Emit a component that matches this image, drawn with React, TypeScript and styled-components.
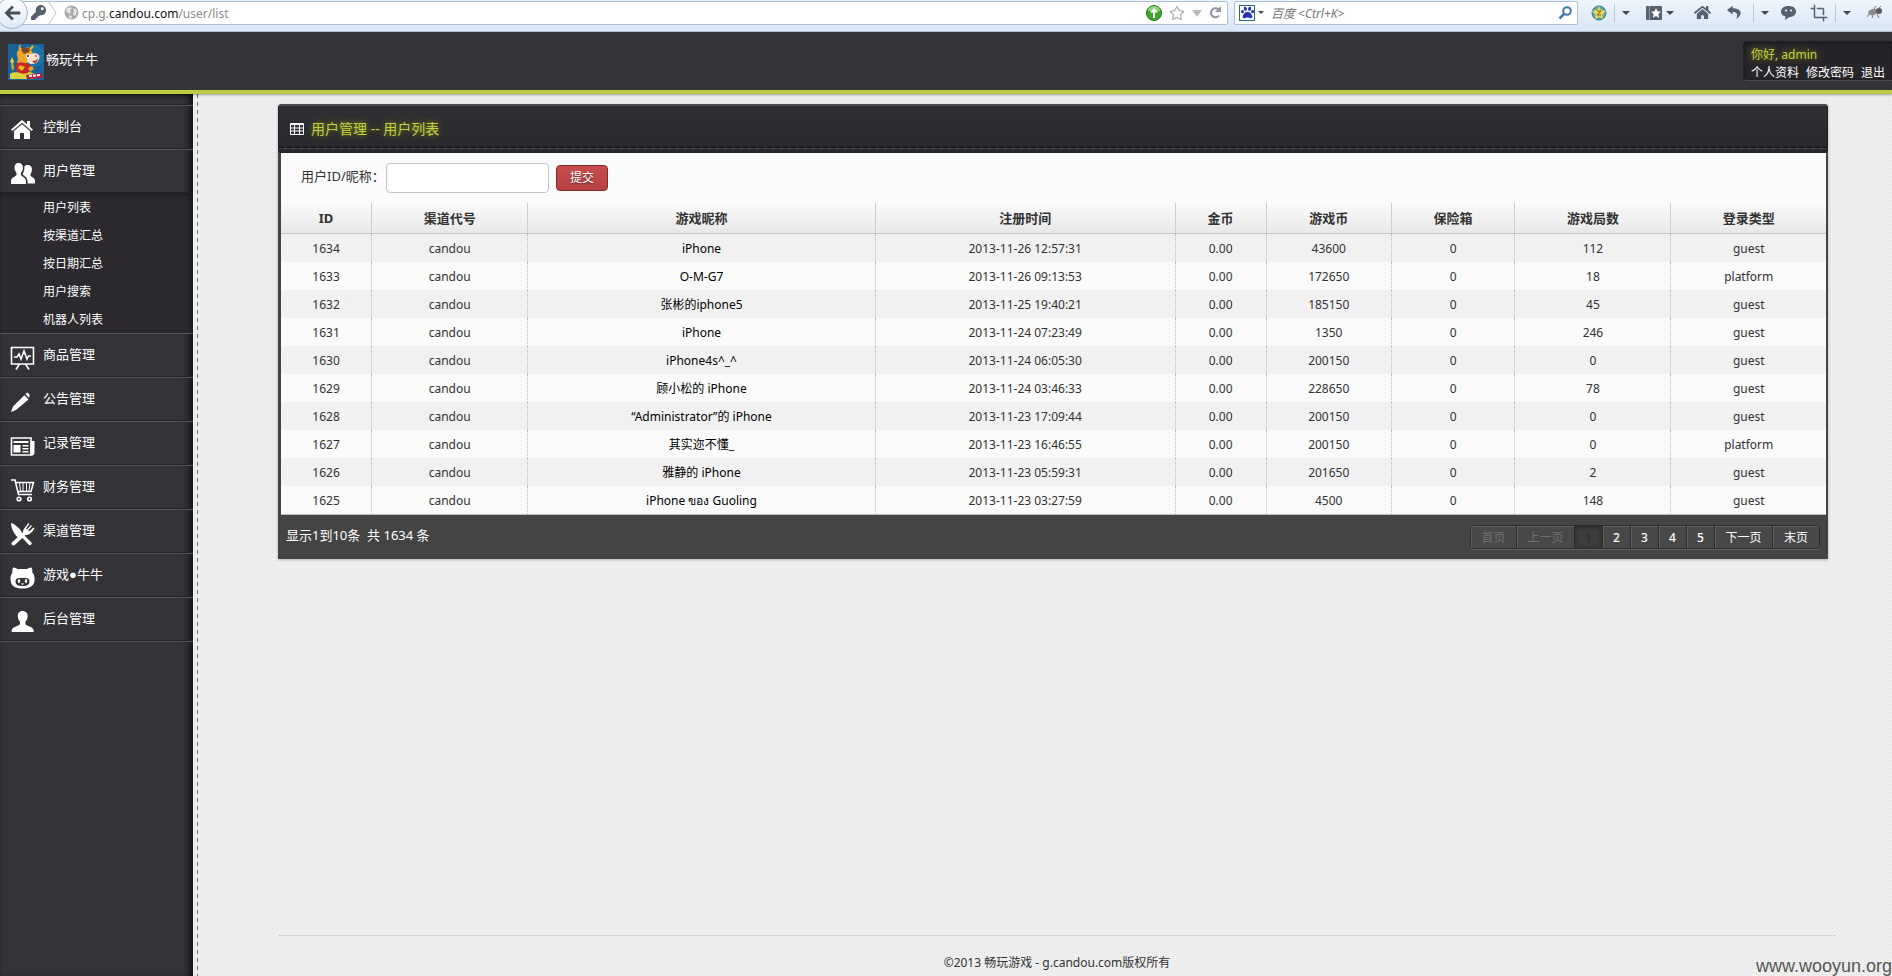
import React from "react";
import styled, { createGlobalStyle, css } from "styled-components";
import { FaRegStar, FaHome, FaPaw, FaKey } from "react-icons/fa";
import { MdCrop } from "react-icons/md";

const sans = `"Noto Sans", "Noto Sans CJK SC", sans-serif`;
const lime = "#bfcc42";

const GlobalStyle = createGlobalStyle`
  * { box-sizing: border-box; }
  html, body, #root { height: 100%; }
  body {
    margin: 0;
    overflow: hidden;
    font-family: ${sans};
    font-size: 12px;
    line-height: 20px;
    color: #333;
    background: #efefef conic-gradient(at 1px 1px, transparent 75%, #dcdcdc 0) 0 0 / 4px 4px;
  }
  a { color: inherit; text-decoration: none; }
  button, input { font: inherit; }
`;

const Page = styled.div`
  display: flex;
  flex-direction: column;
  min-height: 100vh;
  background: conic-gradient(at 1px 1px, transparent 75%, #e0e0e0 0) 2px 2px / 4px 4px;
`;

/* Browser toolbar */
const Toolbar = styled.div`
  display: flex;
  align-items: center;
  height: 32px;
  padding-bottom: 6px;
  background: linear-gradient(#eef5fc, #d8e6f5);
  border-bottom: 1px solid #b5c3d3;
  color: #56616d;
`;
const BackButton = styled.button`
  display: grid;
  place-items: center;
  flex: none;
  width: 32px;
  height: 32px;
  margin: 0 -8px 0 -4px;
  padding: 0;
  border: 1px solid #a3b6c9;
  border-radius: 50%;
  background: linear-gradient(#fdfeff, #dfe9f4);
  color: #46505b;
  z-index: 1;
`;
const Field = styled.div`
  display: flex;
  align-items: center;
  height: 24px;
  border: 1px solid #a9c0d6;
  border-radius: 2px;
  background: #fff;
`;
const AddressField = styled(Field)`
  flex: 1;
  padding: 0 6px 0 10px;
  gap: 7px;
`;
const Identity = styled.div`
  display: flex;
  align-items: center;
  gap: 2px;
`;
const Url = styled.a`
  flex: 1;
  margin-left: -4px;
  padding-top: 2px;
  color: #8c8c8c;
  b { color: #111; font-weight: 400; }
`;
const SearchField = styled(Field)`
  width: 344px;
  margin-left: 6px;
  padding: 0 4px;
  gap: 3px;
`;
const Engine = styled.span`
  display: grid;
  place-items: center;
  width: 16px;
  height: 16px;
  border: 1px solid #2a6a8a;
  color: #2430b8;
`;
const SearchInput = styled.input`
  flex: 1;
  min-width: 0;
  padding: 2px 0 0 4px;
  border: 0;
  outline: 0;
  background: none;
  &::placeholder { color: #777; font-style: italic; opacity: 1; }
`;
const IconButton = styled.button<{ $w?: number }>`
  display: grid;
  place-items: center;
  width: ${(p) => p.$w ?? 16}px;
  height: 18px;
  padding: 0;
  border: 0;
  background: none;
  color: inherit;
`;
const Tools = styled.div`
  display: flex;
  align-items: center;
  gap: 7px;
  width: 314px;
  padding-left: 13px;
  flex: none;
`;
const Divider = styled.span`
  width: 1px;
  height: 18px;
  background: #b9c6d4;
`;
const Caret = styled.span<{ $small?: boolean }>`
  display: inline-block;
  border: ${(p) => (p.$small ? 3 : 4)}px solid transparent;
  border-top-color: #3f4853;
  border-bottom: 0;
`;

/* Site header */
const twill = css`
  background-color: #37363b;
  background-image: linear-gradient(
    135deg,
    rgba(0, 0, 0, 0.12) 25%,
    transparent 25% 50%,
    rgba(0, 0, 0, 0.12) 50% 75%,
    transparent 75%
  );
  background-size: 4px 4px;
`;
const Header = styled.header`
  ${twill}
  display: flex;
  justify-content: space-between;
  height: 62px;
  border-bottom: 4px solid ${lime};
  box-shadow: 0 1px 2px rgba(0, 0, 0, 0.35);
  z-index: 2;
`;
const Brand = styled.a`
  display: flex;
  align-items: center;
  gap: 2px;
  padding: 0 0 4px 8px;
  color: #fff;
  font-size: 13px;
  svg { margin-top: 5px; }
`;
const UserBox = styled.div`
  width: 149px;
  height: 40px;
  margin-top: 9px;
  padding: 4px 0 0 7px;
  line-height: 18px;
  color: #fff;
  white-space: nowrap;
  background: rgba(30, 29, 34, 0.6);
  border: 1px solid #222126;
  border-right: 0;
  border-bottom-color: #4c4b50;
  border-radius: 4px 0 0 4px;
  box-shadow: inset 0 1px 3px rgba(0, 0, 0, 0.4);
`;
const Hello = styled.div`
  color: #c3d042;
  text-shadow: 0 0 6px #8f9c14;
`;
const UserLinks = styled.nav`
  display: flex;
  gap: 7px;
`;

/* Sidebar */
const Body = styled.div`
  display: flex;
  flex: 1;
`;
const Sidebar = styled.aside`
  ${twill}
  flex: none;
  width: 193px;
  padding-top: 10px;
  color: #fff;
  box-shadow: inset -7px 0 6px -3px rgba(0, 0, 0, 0.6), inset 0 4px 4px -2px rgba(0, 0, 0, 0.5);
`;
const Menu = styled.ul`
  margin: 0;
  padding: 0;
  list-style: none;
  border-top: 1px solid #232226;
  border-bottom: 1px solid #55545a;
`;
const MenuLink = styled.a`
  display: flex;
  align-items: center;
  gap: 9px;
  height: 44px;
  padding: 0 0 2px 10px;
  font-size: 13px;
  border-top: 1px solid #55545a;
  border-bottom: 1px solid #232226;
  svg { margin-top: 8px; }
`;
const Bullet = styled.span`
  font-family: "Liberation Sans", sans-serif;
`;
const SubMenu = styled.ul`
  margin: 0;
  padding: 0;
  list-style: none;
  background: rgba(38, 37, 42, 0.6);
  box-shadow: inset 0 2px 3px rgba(0, 0, 0, 0.25);
`;
const SubLink = styled.a`
  display: block;
  padding: 2px 0 0 43px;
  line-height: 26px;
`;

/* Content */
const Content = styled.main`
  display: flex;
  flex: 1;
  flex-direction: column;
  min-width: 0;
  margin-left: 4px;
  padding: 10px 56px 0 81px;
  background: repeating-linear-gradient(#777 0 4px, transparent 4px 8px) 0 0 / 1px 100% no-repeat;
`;
const Panel = styled.section`
  margin-right: 8px;
  background: #444;
  border-radius: 4px 4px 0 0;
  box-shadow: 0 1px 3px rgba(0, 0, 0, 0.25);
`;
const PanelHead = styled.div`
  height: 49px;
  border: 1px solid #222126;
  border-top: 2px solid #4b4a50;
  border-radius: 4px;
  background: linear-gradient(#302f34, #28272c);
`;
const PanelTitle = styled.h1`
  display: flex;
  align-items: center;
  gap: 7px;
  height: 42px;
  margin: 0;
  padding: 4px 0 0 11px;
  font-size: 14px;
  font-weight: 400;
  color: #c3d042;
  text-shadow: 0 0 6px #8f9c14;
  background: repeating-linear-gradient(90deg, #0c0c0e 0 5px, transparent 5px 8px) 0 100% / 100% 1px no-repeat;
  box-shadow: 0 1px 0 #444349;
`;
const PanelBody = styled.div`
  margin: 0 2px 0 3px;
  background: #fafafa;
  border-bottom: 1px solid #bbb;
`;
const Filter = styled.form`
  display: flex;
  align-items: center;
  height: 50px;
  padding-left: 20px;
`;
const FilterLabel = styled.label`
  width: 85px;
  padding-bottom: 4px;
  font-size: 13px;
  white-space: nowrap;
`;
const FilterInput = styled.input`
  width: 163px;
  height: 30px;
  padding: 4px 6px;
  border: 1px solid #c4c4c4;
  border-radius: 4px;
  background: #fff;
`;
const Submit = styled.button`
  width: 52px;
  height: 26px;
  margin-left: 7px;
  padding: 0;
  font-size: 12px;
  color: #fff;
  text-shadow: 0 1px 2px rgba(0, 0, 0, 0.5);
  background: linear-gradient(#c84c4c, #b64242);
  border: 1px solid #7e2b2b;
  border-radius: 4px;
`;
const Table = styled.table`
  width: 100%;
  table-layout: fixed;
  border-collapse: separate;
  border-spacing: 0;
  text-align: center;
  th {
    height: 31px;
    padding: 0;
    font-size: 13px;
    font-weight: 700;
    background: linear-gradient(#fafafa, #e8e8e8);
    border-bottom: 1px solid #c6c6c6;
    border-right: 1px solid #ccc;
  }
  td {
    height: 28px;
    padding: 2px 0 0;
    border-right: 1px dotted #bbb;
  }
  th:last-child, td:last-child { border-right: 0; }
  td:nth-child(3) { color: #000; }
  tbody tr:nth-child(odd) { background: #f1f1f1; }
`;
const Col = styled.col<{ $share: number }>`
  width: ${(p) => p.$share}%;
`;
const PanelFoot = styled.div`
  display: flex;
  align-items: center;
  justify-content: space-between;
  height: 44px;
  padding: 0 8px;
  color: #fff;
`;
const Summary = styled.span`
  padding-bottom: 4px;
  font-size: 13px;
`;
const Pager = styled.nav`
  display: flex;
  height: 24px;
  border: 1px solid #2a2a2a;
  border-radius: 4px;
  overflow: hidden;
  box-shadow: 0 1px 0 #666;
`;
const PageButton = styled.button<{ $active?: boolean; $wide?: number }>`
  width: ${(p) => p.$wide ?? 28}px;
  padding: 2px 0 0;
  font-size: 12px;
  font-weight: ${(p) => (p.$wide ? 400 : 500)};
  line-height: 20px;
  color: #fff;
  background: #484848;
  border: 1px solid #2a2a2a;
  border-width: 0 1px 0 0;
  box-shadow: inset 1px 1px 0 #626262;
  &:disabled { color: #707070; }
  &:last-child { border-right: 0; }
  ${(p) =>
    p.$active &&
    css`
      background: #3d3d3d;
      box-shadow: inset 0 1px 4px rgba(0, 0, 0, 0.4);
      &:disabled { color: #2c2c2c; }
    `}
`;
const Footer = styled.footer`
  margin-top: auto;
  padding: 17px 0 3px;
  text-align: center;
  border-top: 1px solid #d4d6d3;
`;
const Watermark = styled.div`
  position: absolute;
  right: 0;
  bottom: 0;
  font: 18px/20px "Liberation Sans", sans-serif;
  color: #555;
`;

const Icon = ({ size = 24, children, vb = 24 }: { size?: number; vb?: number; children: React.ReactNode }) => (
  <svg width={size} height={size} viewBox={`0 0 ${vb} ${vb}`} fill="currentColor" overflow="visible" aria-hidden>
    {children}
  </svg>
);

const stroke = { fill: "none", stroke: "currentColor", strokeWidth: 1.6 } as const;

const icons = {
  home: (
    <Icon>
      <path d="M12 2 1 11.5l1.3 1.5L12 4.800l9.700 8.200L23 11.500l-3-2.600V3h-3v3.200z" />
      <path d="M12 6.300 4 13v8h6v-6h4v6h6v-8z" />
    </Icon>
  ),
  users: (
    <Icon>
      <path d="M8.500 1C5.700 1 4.300 3 4.500 6c.1 2 1 3.600 2 4.700v2.300C6 14.500 1 15.500 1 19v3h15v-3c0-3.500-4.500-4.500-5-6v-2.300c1-1.100 1.900-2.700 2-4.700.2-3-1.500-5-4.500-5z" />
      <path d="M17.500 3c-1.500 0-2.700.6-3.200 2 .4 2.500-.3 4.800-1.500 6.500v1c1 1.500 4.700 2.500 4.700 6.500v2.500H25v-3c0-3-4-3.500-4.500-5v-1.800c1-1 1.500-2.200 1.500-4.200C22 5 20.500 3 17.500 3z" />
    </Icon>
  ),
  board: (
    <Icon>
      <path {...stroke} d="M1.500 1.500h22v16.500H1.500zM9.500 18l-3.500 5.500M15.500 18l3.500 5.500M4 11h3l2-3 2 5 3-8 3 8 1.500-3H21" />
    </Icon>
  ),
  pencil: (
    <Icon>
      <path d="M14.300 5.200 18.500 9.400 6 20l-5 2 2-5.500zM15.500 4l1-1c1-.9 4 1.900 3 3.200l-1 1.500z" />
    </Icon>
  ),
  news: (
    <Icon>
      <path {...stroke} d="M1.500 4h19.500v17H1.500z" />
      <path d="M21 7h3.500v12.500L23 21.500h-3zM3.500 11h7v7.500h-7zM3.500 7h15v2h-15zM12.500 11h6v1.600h-6zM12.500 14h6v1.600h-6zM12.500 17h6v1.600h-6z" />
    </Icon>
  ),
  cart: (
    <Icon>
      <path {...stroke} d="M1 2h4l3.500 14.500H22M5.500 4.500h18L21 13.500H7.700" />
      <path {...stroke} strokeWidth={1} d="M9.500 5l1 8M13 5v8M16.500 5v8M20 5l-1 8" />
      <circle {...stroke} cx="9" cy="21" r="1.800" />
      <circle {...stroke} cx="19.500" cy="21" r="1.800" />
    </Icon>
  ),
  cutlery: (
    <Icon>
      <path d="M1 1c4 1 9 5.500 11 9.500l2 2.500 7.500 7.500c1 1.500-1 3.500-2.500 2.500L11.500 15 8 15.500C3.500 11.500 1 5.500 1 1z" />
      <path d="M1.800 20.500 13 10.500c0-3 1-4 5.500-9.500l1 1-3.500 4.500 1 1L21 3l1 1-3.800 4.300 1 1L23.500 5.500l1 1c-3.500 5-5.500 6.500-9 6.500L4.500 23.300c-1.500 1.200-4-1.300-2.700-2.800z" />
    </Icon>
  ),
  cat: (
    <Icon>
      <path
        fillRule="evenodd"
        d="M3 1.500c2 0 4 1 5 1.700 2.500-.4 6-.4 8.500 0 1-.7 3-1.700 5-1.700.9 1.800 1 3.500.8 5C24.500 8.500 25 12 24.500 15c-1 5.500-5 7.500-12 7.500S1.500 20.500.7 15C.2 12 .5 9 2.400 6.500c-.2-1.500-.2-3.200.6-5zM9 12c-2.400 0-3.500 1.300-3.500 3.500 0 3.200 2.500 4.500 7 4.500s7-1.300 7-4.500c0-2.200-1.100-3.500-3.500-3.500-2.400 0-4.600 0-7 0z"
      />
      <ellipse cx="9" cy="15" rx="1.200" ry="2" />
      <ellipse cx="16" cy="15" rx="1.200" ry="2" />
      <path d="M10.500 17.500h4l-2 1.500z" />
    </Icon>
  ),
  user: (
    <Icon>
      <path d="M12.500 1C9.200 1 7.500 3.300 7.800 6.500c.2 2.500 1 4 2.200 5v2.500c-.8 2.500-8.300 2.500-8.300 6.500V22h22v-1.500c0-4-7.500-4-8.300-6.500v-2.500c1.200-1 2-2.500 2.200-5C18 3.300 15.800 1 12.500 1z" />
    </Icon>
  ),
};

const Logo = () => (
  <svg width="36" height="36" viewBox="0 0 36 36" aria-hidden>
    <rect width="36" height="36" rx="1" fill="#17639a" />
    <circle cx="26" cy="12" r="11" fill="#1d72a6" />
    <path d="M5 27c-3-3-1-6-2-10 3 2 3 6 3 8z" fill="#d99a2a" />
    <path d="M2 18l2-5 2 4-1 3z" fill="#f0c040" />
    <path d="M2 30c4-3 7-1 12-2s11 0 14 3l-3 4H2z" fill="#d9d23c" />
    <path d="M10 14c-2-4-1-7 1-8-1-3 0-5 2-5-1 2 0 4 2 4 3-2 5-2 7-1 1-2 2-3 4-2-1 1-1 3-3 4 1 2 2 3 2 5l-2 6-8 4-6-2z" fill="#f0a52b" />
    <path d="M13 6c2-3 7-3 9-1l-1 3-5 2z" fill="#7d4a28" />
    <path d="M19 14c2-5 9-6 12-3 2 4-2 9-7 9-3 0-5-2-5-6z" fill="#f7e2cf" />
    <path d="M24 17c3 0 5-1 6-3 0 3-2 5-4 5z" fill="#b83a2c" />
    <circle cx="20" cy="12" r="2" fill="#fff" />
    <circle cx="20" cy="12" r="1" fill="#3b1d10" />
    <circle cx="28" cy="12" r="1" fill="#b4553a" />
    <path d="M8 20c5-3 11-1 15 2l-3 7c-5 2-10 0-12-3z" fill="#c8261f" />
    <path d="m12 21 5 2-3 4-4-3z" fill="#efb32e" />
    <path d="m20 24 4-2 2 3-4 3z" fill="#f0a52b" />
    <path d="m18 31 16-2 1 5-16 1z" fill="#b51c34" />
    <path d="m21 32 12-1" stroke="#fff" strokeWidth="2" strokeDasharray="3 1" />
  </svg>
);

const menu: { icon: keyof typeof icons; label: React.ReactNode; sub?: string[] }[] = [
  { icon: "home", label: "控制台" },
  { icon: "users", label: "用户管理", sub: ["用户列表", "按渠道汇总", "按日期汇总", "用户搜索", "机器人列表"] },
  { icon: "board", label: "商品管理" },
  { icon: "pencil", label: "公告管理" },
  { icon: "news", label: "记录管理" },
  { icon: "cart", label: "财务管理" },
  { icon: "cutlery", label: "渠道管理" },
  { icon: "cat", label: <>游戏<Bullet>●</Bullet>牛牛</> },
  { icon: "user", label: "后台管理" },
];

const columns: [string, number][] = [
  ["ID", 5.9],
  ["渠道代号", 10.1],
  ["游戏昵称", 22.5],
  ["注册时间", 19.4],
  ["金币", 5.9],
  ["游戏币", 8.1],
  ["保险箱", 8],
  ["游戏局数", 10.1],
  ["登录类型", 10],
];

const rows = [
  ["1634", "candou", "iPhone", "2013-11-26 12:57:31", "0.00", "43600", "0", "112", "guest"],
  ["1633", "candou", "O-M-G7", "2013-11-26 09:13:53", "0.00", "172650", "0", "18", "platform"],
  ["1632", "candou", "张彬的iphone5", "2013-11-25 19:40:21", "0.00", "185150", "0", "45", "guest"],
  ["1631", "candou", "iPhone", "2013-11-24 07:23:49", "0.00", "1350", "0", "246", "guest"],
  ["1630", "candou", "iPhone4s^_^", "2013-11-24 06:05:30", "0.00", "200150", "0", "0", "guest"],
  ["1629", "candou", "顾小松的 iPhone", "2013-11-24 03:46:33", "0.00", "228650", "0", "78", "guest"],
  ["1628", "candou", "“Administrator”的 iPhone", "2013-11-23 17:09:44", "0.00", "200150", "0", "0", "guest"],
  ["1627", "candou", "其实迩不懂_", "2013-11-23 16:46:55", "0.00", "200150", "0", "0", "platform"],
  ["1626", "candou", "雅静的 iPhone", "2013-11-23 05:59:31", "0.00", "201650", "0", "2", "guest"],
  ["1625", "candou", "iPhone ของ Guoling", "2013-11-23 03:27:59", "0.00", "4500", "0", "148", "guest"],
];

const BrowserBar = () => (
  <Toolbar>
    <BackButton aria-label="Back">
      <Icon size={18}>
        <path d="M12 2 2 12l10 10 2.500-2.700L9 14h14v-4H9l5.500-5.300z" />
      </Icon>
    </BackButton>
    <AddressField>
      <Identity>
        <FaKey size={15} />
        <svg width="9" height="22" viewBox="0 0 9 22" fill="none" stroke="#b8c4d0" aria-hidden>
          <path d="m1 0 7 11-7 11" />
        </svg>
      </Identity>
      <svg width="15" height="15" viewBox="0 0 15 15" aria-hidden>
        <circle cx="7.500" cy="7.500" r="7" fill="#a9a9a9" />
        <path d="M3 3l4-1 1 2-2 1 1 2-2 2-3-3zM9 3l4 2-1 5-2 1-1-3 1-2zM5 10l3 1-1 3-2-1z" fill="#e6e6e6" />
      </svg>
      <Url href="#">cp.g.<b>candou.com</b>/user/list</Url>
      <svg width="16" height="16" viewBox="0 0 16 16" aria-hidden>
        <circle cx="8" cy="8" r="7.500" fill="#3da72c" stroke="#1f7a1b" />
        <path d="M2 6a6 5 0 0 1 12 0z" fill="#8fd67e" />
        <path d="M8 3 4 7.500h3V13h2V7.500h3z" fill="#fff" />
      </svg>
      <FaRegStar size={16} color="#b4b4b4" />
      <Icon size={10} vb={10}><path d="M0 2h10L5 9z" fill="#b8bcc2" /></Icon>
      <IconButton $w={12} aria-label="Reload">
        <svg width="13" height="13" viewBox="0 0 13 13" fill="none" stroke="#8d97a3" strokeWidth="2" aria-hidden>
          <path d="M10 9.500A4.500 4.500 0 1 1 9.500 3.500" />
          <path d="M12 0v6H6z" fill="#8d97a3" stroke="none" />
        </svg>
      </IconButton>
    </AddressField>
    <SearchField>
      <Engine><FaPaw size={13} /></Engine>
      <Caret $small />
      <SearchInput aria-label="Search" placeholder="百度 <Ctrl+K>" />
      <IconButton aria-label="Search">
        <svg width="14" height="14" viewBox="0 0 14 14" fill="none" stroke="#3d7ba8" aria-hidden>
          <circle cx="9" cy="5" r="3.800" strokeWidth="2" />
          <path d="M6 8 1.500 12.500" strokeWidth="2.500" />
        </svg>
      </IconButton>
    </SearchField>
    <Tools>
      <IconButton aria-label="Extension">
        <svg width="16" height="16" viewBox="0 0 16 16" aria-hidden>
          <circle cx="8" cy="8" r="7" fill="#5ba8a0" stroke="#2e7b93" />
          <path d="m8 1 2 4 5 1-3.500 3.500L12 14l-4-2-4 2 .5-4.500L1 6l5-1z" fill="#e8d45c" />
          <path d="M6 6h4L6 10h4" fill="none" stroke="#7a5b18" />
        </svg>
      </IconButton>
      <Divider />
      <IconButton $w={8} aria-label="Extension menu"><Caret /></IconButton>
      <IconButton $w={48} aria-label="Bookmarks">
        <svg width="28" height="14" viewBox="0 0 28 14" aria-hidden>
          <rect width="16" height="14" rx="1" fill="#56616d" />
          <path d="M3.500 0v14" stroke="#8d98a5" />
          <path d="m10 2 1.500 3.300 3.500.4-2.600 2.400.7 3.600L10 9.900l-3.100 1.800.7-3.600L5 5.700l3.500-.4z" fill="#fff" />
          <path d="M20 5h8l-4 4z" fill="#3f4853" />
        </svg>
      </IconButton>
      <IconButton $w={28} aria-label="Home"><FaHome size={17} /></IconButton>
      <IconButton $w={24} aria-label="Undo">
        <Icon size={15}><path d="M9 1 0 8l9 7v-4c6 0 9 2 6 11 11-7 9-17-6-17z" /></Icon>
      </IconButton>
      <Divider />
      <IconButton $w={8} aria-label="Undo menu"><Caret /></IconButton>
      <IconButton $w={28} aria-label="Chat">
        <svg width="15" height="14" viewBox="0 0 15 14" aria-hidden>
          <path d="M7.500 0C12 0 15 2.200 15 5.500S12 11 8.500 11L4 14l.5-3.500C1.500 9.700 0 8 0 5.500 0 2.200 3 0 7.500 0z" fill="#56616d" />
          <circle cx="5" cy="4.500" r="1" fill="#fff" />
          <circle cx="10" cy="4.500" r="1" fill="#fff" />
        </svg>
      </IconButton>
      <IconButton $w={20} aria-label="Crop"><MdCrop size={18} /></IconButton>
      <Divider />
      <IconButton $w={8} aria-label="Crop menu"><Caret /></IconButton>
      <IconButton $w={36} aria-label="Firebug">
        <svg width="16" height="13" viewBox="0 0 16 13" aria-hidden>
          <ellipse cx="6" cy="6" rx="5" ry="3" fill="#8c8c8c" transform="rotate(-15 6 6)" />
          <circle cx="12" cy="5" r="3" fill="#5c5c5c" />
          <path d="m2 8-2 3M6 9l-1 3M10 8l2 4M7 3l2-3M12 2l2-2" stroke="#777" />
        </svg>
      </IconButton>
    </Tools>
  </Toolbar>
);

export default function App() {
  return (
    <Page>
      <GlobalStyle />
      <BrowserBar />
      <Header>
        <Brand href="#"><Logo />畅玩牛牛</Brand>
        <UserBox>
          <Hello>你好, admin</Hello>
          <UserLinks>
            <a href="#">个人资料</a>
            <a href="#">修改密码</a>
            <a href="#">退出</a>
          </UserLinks>
        </UserBox>
      </Header>
      <Body>
        <Sidebar>
          <Menu>
            {menu.map((m) => (
              <li key={m.icon}>
                <MenuLink href="#">{icons[m.icon]}<span>{m.label}</span></MenuLink>
                {m.sub && (
                  <SubMenu>
                    {m.sub.map((s) => <li key={s}><SubLink href="#">{s}</SubLink></li>)}
                  </SubMenu>
                )}
              </li>
            ))}
          </Menu>
        </Sidebar>
        <Content>
          <Panel>
            <PanelHead>
              <PanelTitle>
                <svg width="14" height="12" viewBox="0 0 14 12" aria-hidden>
                  <path d="M.5.500h13v11H.5zM.5 1.500h13M.5 5h13M.5 8h13M4.500 0v12M9.500 0v12" fill="none" stroke="#fff" />
                </svg>
                用户管理 -- 用户列表
              </PanelTitle>
            </PanelHead>
            <PanelBody>
              <Filter onSubmit={(e) => e.preventDefault()}>
                <FilterLabel htmlFor="keyword">用户ID/昵称：</FilterLabel>
                <FilterInput id="keyword" type="text" />
                <Submit type="submit">提交</Submit>
              </Filter>
              <Table>
                <colgroup>{columns.map(([name, share]) => <Col key={name} $share={share} />)}</colgroup>
                <thead>
                  <tr>{columns.map(([name]) => <th key={name} scope="col">{name}</th>)}</tr>
                </thead>
                <tbody>
                  {rows.map((r) => (
                    <tr key={r[0]}>{r.map((c, i) => <td key={i}>{c}</td>)}</tr>
                  ))}
                </tbody>
              </Table>
            </PanelBody>
            <PanelFoot>
              <Summary>显示1到10条&nbsp; 共 1634 条</Summary>
              <Pager aria-label="Pages">
                <PageButton $wide={46} disabled>首页</PageButton>
                <PageButton $wide={58} disabled>上一页</PageButton>
                <PageButton $active disabled>1</PageButton>
                <PageButton>2</PageButton>
                <PageButton>3</PageButton>
                <PageButton>4</PageButton>
                <PageButton>5</PageButton>
                <PageButton $wide={58}>下一页</PageButton>
                <PageButton $wide={46}>末页</PageButton>
              </Pager>
            </PanelFoot>
          </Panel>
          <Footer>©2013 畅玩游戏 - g.candou.com版权所有</Footer>
        </Content>
      </Body>
      <Watermark>www.wooyun.org</Watermark>
    </Page>
  );
}
